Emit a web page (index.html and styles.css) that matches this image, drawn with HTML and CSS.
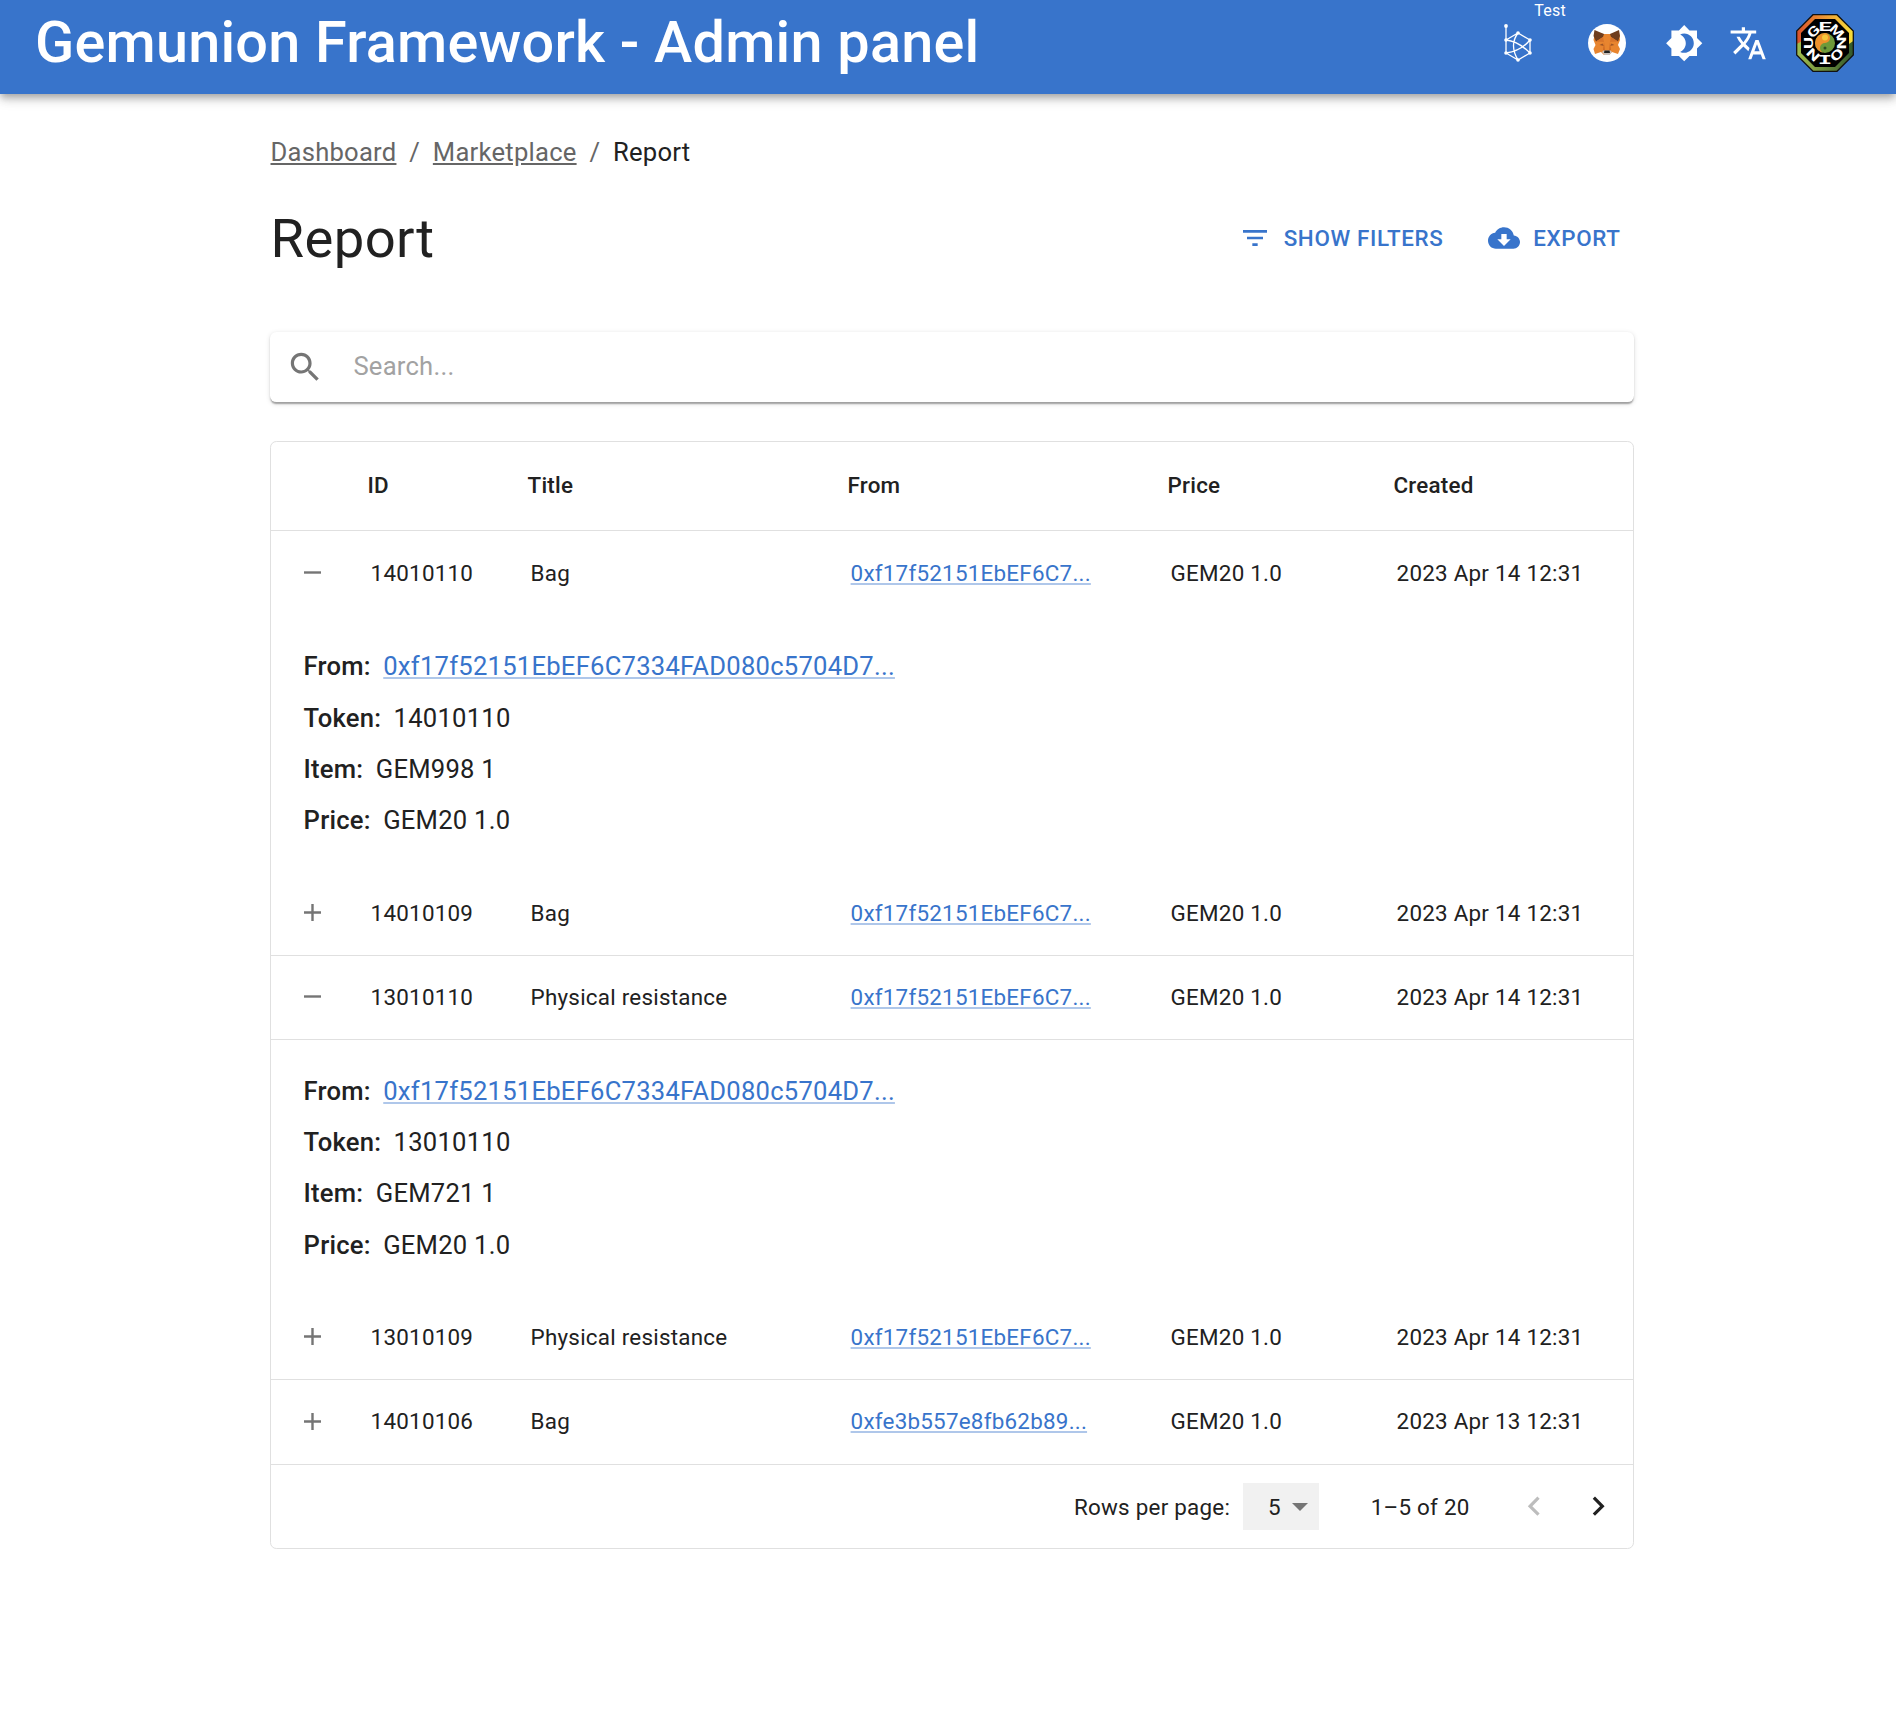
FILE: index.html
```
<!DOCTYPE html>
<html lang="en">
<head>
<meta charset="utf-8">
<title>Gemunion Framework - Admin panel</title>
<link rel="stylesheet" href="styles.css">
</head>
<body>
<header class="appbar">
  <h1 class="brand">Gemunion Framework - Admin panel</h1>
  <nav class="tools">
    <span class="tool network">
      <svg viewBox="0 0 30 40" width="30" height="40" fill="none" stroke="#fff" stroke-width="1.3">
        <path d="M3 3V30L15 37L27 30V17L15 10L3 17M15 10L27 17M3 17Q15 18 27 30M27 17Q18 28 3 30M15 10Q6 22 15 37"/>
        <g fill="#fff" stroke="none"><circle cx="3" cy="3" r="1.9"/><circle cx="3" cy="17" r="1.8"/><circle cx="15" cy="10" r="1.8"/><circle cx="27" cy="17" r="1.8"/><circle cx="27" cy="30" r="1.8"/><circle cx="3" cy="30" r="1.8"/><circle cx="15" cy="37" r="1.8"/></g>
      </svg>
      <span class="badge">Test</span>
    </span>
    <span class="tool wallet">
      <svg viewBox="0 0 38 38" width="38" height="38">
        <circle cx="19" cy="19" r="19" fill="#fff"/>
        <path d="M7 9L16 10H22L31 9L32 16L30 21L32 25L30 30L24 28L21 31H16L13 28L7 30L5.5 25L7.5 21L5.5 16Z" fill="#e8852f"/>
        <path d="M6.5 6L16 10L15 13L8 17.5L5.5 12ZM31 6L22 10L23 13L30 17.5L32 12Z" fill="#6f3d1d"/>
        <path d="M15 13L8 17.5L16 18ZM23 13L30 17.5L22 18Z" fill="#d8742a"/>
        <path d="M11.5 21L14.5 19.5L16 22ZM26.5 21L23.5 19.5L22 22Z" fill="#9b5426"/>
        <path d="M16 18L15 26L17 27ZM22 18L23 26L21 27Z" fill="#cf6b24"/>
        <path d="M14 28L15.5 26.5H22.5L24 28L21.5 31H16.5Z" fill="#c9c0ba"/>
        <path d="M16.5 26.5H21.5L22 29H16Z" fill="#222"/>
      </svg>
    </span>
    <span class="tool theme">
      <svg viewBox="0 0 24 24" width="38.4" height="38.4" fill="#fff"><path d="M20 8.69V4h-4.69L12 .69 8.69 4H4v4.69L.69 12 4 15.31V20h4.69L12 23.31 15.31 20H20v-4.69L23.31 12 20 8.69zM12 18c-.89 0-1.74-.2-2.5-.55C11.56 16.5 13 14.42 13 12s-1.44-4.5-3.5-5.45C10.26 6.2 11.11 6 12 6c3.31 0 6 2.69 6 6s-2.69 6-6 6z"/></svg>
    </span>
    <span class="tool lang">
      <svg viewBox="0 0 24 24" width="38.4" height="38.4" fill="#fff"><path d="M12.87 15.07l-2.54-2.51.03-.03c1.74-1.94 2.98-4.17 3.71-6.53H17V4h-7V2H8v2H1v1.99h11.17C11.5 7.92 10.44 9.75 9 11.35 8.07 10.32 7.3 9.19 6.69 8h-2c.73 1.63 1.73 3.17 2.98 4.56l-5.09 5.02L4 19l5-5 3.11 3.11.76-2.04zM18.5 10h-2L12 22h2l1.12-3h4.75L21 22h2l-4.5-12zm-2.62 7l1.62-4.33L19.12 17h-3.24z"/></svg>
    </span>
    <span class="tool avatar">
      <svg viewBox="0 0 58 58" width="58" height="58">
        <defs>
          <linearGradient id="warm"><stop offset="0" stop-color="#d9502a"/><stop offset=".5" stop-color="#ee9a35"/><stop offset="1" stop-color="#f7e03a"/></linearGradient>
          <linearGradient id="leaf"><stop offset="0" stop-color="#a3bf4e"/><stop offset="1" stop-color="#33592b"/></linearGradient>
        </defs>
        <path d="M17 .7H41L57.3 17V41L41 57.3H17L.7 41V17Z" fill="url(#leaf)"/>
        <path d="M.7 30V17L17 .7H41L57.3 17V27L50 32L29 26L8 26Z" fill="url(#warm)"/>
        <path d="M17 .7H41L57.3 17V41L41 57.3H17L.7 41V17Z" fill="none" stroke="#111" stroke-width="1.3"/>
        <path d="M19 5H39L53 19V39L39 53H19L5 39V19Z" fill="#000"/>
        <g class="ring">
          <text transform="rotate(-45 29 29) translate(29 17) scale(1.4 1)">G</text>
          <text transform="translate(29 17) scale(1.8 1)">E</text>
          <text transform="rotate(45 29 29) translate(29 17) scale(1.25 1)">M</text>
          <text transform="rotate(90 29 29) translate(29 17) scale(1.4 1)">N</text>
          <text transform="rotate(135 29 29) translate(29 17) scale(1.5 1)">O</text>
          <g class="serif"><text transform="rotate(180 29 29) translate(29 17) scale(1.8 1)">I</text></g>
          <text transform="rotate(225 29 29) translate(29 17) scale(1.4 1)">N</text>
          <text transform="rotate(270 29 29) translate(29 17) scale(1.4 1)">U</text>
        </g>
        <circle cx="29" cy="29" r="10" fill="#6e9a3a"/>
        <path d="M29 19A10 10 0 0 0 29 39A5 5 0 0 1 29 29A5 5 0 0 0 29 19Z" fill="#ee922c"/>
        <circle cx="29" cy="23.5" r="3" fill="#f5c83a"/>
        <circle cx="29" cy="34" r="1.5" fill="#2f4f22"/>
      </svg>
    </span>
  </nav>
</header>

<main class="container">
  <nav class="crumbs">
    <a>Dashboard</a><span class="sep">/</span><a>Marketplace</a><span class="sep">/</span><span class="current">Report</span>
  </nav>
  <div class="heading">
    <h2 class="title">Report</h2>
    <div class="actions">
      <button class="action"><svg viewBox="0 0 24 24" width="32" height="32" fill="currentColor"><path d="M10 18h4v-2h-4v2zM3 6v2h18V6H3zm3 7h12v-2H6v2z"/></svg>Show filters</button>
      <button class="action"><svg viewBox="0 0 24 24" width="32" height="32" fill="currentColor"><path d="M19.35 10.04C18.67 6.59 15.64 4 12 4 9.11 4 6.6 5.64 5.35 8.04 2.34 8.36 0 10.91 0 14c0 3.31 2.69 6 6 6h13c2.76 0 5-2.24 5-5 0-2.64-2.05-4.78-4.65-4.96zM17 13l-5 5-5-5h3V9h4v4h3z"/></svg>Export</button>
    </div>
  </div>
  <div class="search">
    <svg viewBox="0 0 24 24" width="38.4" height="38.4" fill="#757575"><path d="M15.5 14h-.79l-.28-.27C15.41 12.59 16 11.11 16 9.5 16 5.91 13.09 3 9.5 3S3 5.91 3 9.5 5.91 16 9.5 16c1.61 0 3.09-.59 4.23-1.57l.27.28v.79l5 4.99L20.49 19l-4.99-5zm-6 0C7.01 14 5 11.99 5 9.5S7.01 5 9.5 5 14 7.01 14 9.5 11.99 14 9.5 14z"/></svg>
    <span class="placeholder">Search...</span>
  </div>

  <section class="grid">
    <div class="row head"><span></span><span>ID</span><span>Title</span><span>From</span><span>Price</span><span>Created</span></div>
    <div class="row open"><svg class="toggle" viewBox="0 0 17 17"><path d="M0 8.5H17"/></svg><span>14010110</span><span>Bag</span><span><a class="link">0xf17f52151EbEF6C7...</a></span><span>GEM20 1.0</span><span>2023 Apr 14 12:31</span></div>
    <div class="detail first">
      <p><b>From:</b><a class="link">0xf17f52151EbEF6C7334FAD080c5704D7...</a></p>
      <p><b>Token:</b>14010110</p>
      <p><b>Item:</b>GEM998 1</p>
      <p><b>Price:</b>GEM20 1.0</p>
    </div>
    <div class="row"><svg class="toggle" viewBox="0 0 17 17"><path d="M0 8.5H17M8.5 0V17"/></svg><span>14010109</span><span>Bag</span><span><a class="link">0xf17f52151EbEF6C7...</a></span><span>GEM20 1.0</span><span>2023 Apr 14 12:31</span></div>
    <div class="row"><svg class="toggle" viewBox="0 0 17 17"><path d="M0 8.5H17"/></svg><span>13010110</span><span>Physical resistance</span><span><a class="link">0xf17f52151EbEF6C7...</a></span><span>GEM20 1.0</span><span>2023 Apr 14 12:31</span></div>
    <div class="detail">
      <p><b>From:</b><a class="link">0xf17f52151EbEF6C7334FAD080c5704D7...</a></p>
      <p><b>Token:</b>13010110</p>
      <p><b>Item:</b>GEM721 1</p>
      <p><b>Price:</b>GEM20 1.0</p>
    </div>
    <div class="row"><svg class="toggle" viewBox="0 0 17 17"><path d="M0 8.5H17M8.5 0V17"/></svg><span>13010109</span><span>Physical resistance</span><span><a class="link">0xf17f52151EbEF6C7...</a></span><span>GEM20 1.0</span><span>2023 Apr 14 12:31</span></div>
    <div class="row last"><svg class="toggle" viewBox="0 0 17 17"><path d="M0 8.5H17M8.5 0V17"/></svg><span>14010106</span><span>Bag</span><span><a class="link">0xfe3b557e8fb62b89...</a></span><span>GEM20 1.0</span><span>2023 Apr 13 12:31</span></div>
    <footer class="pager">
      <span>Rows per page:</span>
      <span class="select">5<svg viewBox="0 0 16 8" width="16" height="8" fill="#757575"><path d="M0 0H16L8 8Z"/></svg></span>
      <span class="range">1–5 of 20</span>
      <svg class="prev" viewBox="0 0 24 24" width="38.4" height="38.4" fill="#bdbdbd"><path d="M15.41 7.41 14 6l-6 6 6 6 1.41-1.41L10.83 12z"/></svg>
      <svg class="next" viewBox="0 0 24 24" width="38.4" height="38.4" fill="#212121"><path d="M10 6 8.59 7.41 13.17 12l-4.58 4.59L10 18l6-6z"/></svg>
    </footer>
  </section>
</main>
</body>
</html>
```
FILE: styles.css
```
* { box-sizing: border-box; }
body {
  margin: 0;
  min-height: 1720px;
  background: #fff;
  color: #212121;
  font: 400 25.6px/38px Roboto, sans-serif;
  letter-spacing: 0.24px;
}
h1, h2, p { margin: 0; font-weight: 400; }
svg { display: block; flex: none; }

.appbar {
  display: flex;
  justify-content: space-between;
  height: 94px;
  padding: 0 42px 0 35px;
  background: #3874cb;
  color: #fff;
  box-shadow: 0 3.2px 6.4px -1.6px rgba(0,0,0,.2), 0 6.4px 8px rgba(0,0,0,.14), 0 1.6px 16px rgba(0,0,0,.12);
}
.brand { font-size: 57.6px; font-weight: 500; line-height: 86px; letter-spacing: 0.22px; white-space: nowrap; }
.tools { display: flex; align-items: center; height: 86px; }
.network { position: relative; margin-right: 55px; }
.badge { position: absolute; left: 31px; top: -22px; font-size: 16px; line-height: 20px; }
.wallet { margin-right: 39px; }
.theme { margin-right: 25px; }
.lang { margin-right: 29px; }
.ring { fill: #fff; font: 700 13px Roboto, sans-serif; letter-spacing: 0; text-anchor: middle; }
.serif { font-family: "Liberation Mono", monospace; }

.container { display: flex; flex-direction: column; width: 1364px; margin: 0 0 0 270px; }
.crumbs { display: flex; margin-top: 39px; padding-left: 0.5px; color: #666; }
.crumbs a { text-decoration: underline; }
.crumbs .sep { margin: 0 12.8px; }
.current { color: #212121; }

.heading { display: flex; justify-content: space-between; align-items: center; margin-top: 32px; height: 70px; }
.title { padding-left: 0.6px; font-size: 54.4px; line-height: 67px; letter-spacing: 0.4px; }
.actions { display: flex; gap: 45px; padding-right: 13.4px; }
.action {
  display: flex;
  align-items: center;
  gap: 12.8px;
  padding: 0;
  border: 0;
  background: none;
  color: #3874cb;
  font: 500 22.4px/39px Roboto, sans-serif;
  letter-spacing: 0.64px;
  text-transform: uppercase;
}

.search {
  display: flex;
  align-items: center;
  height: 70px;
  margin-top: 59px;
  padding-left: 16px;
  border-radius: 6.4px;
  box-shadow: 0 3.2px 1.6px -1.6px rgba(0,0,0,.2), 0 1.6px 1.6px rgba(0,0,0,.14), 0 1.6px 4.8px rgba(0,0,0,.12);
}
.placeholder { margin-left: 29px; padding-bottom: 2px; color: #a2a2a2; }

.grid { margin-top: 39px; border: 1px solid #e0e0e0; border-radius: 6.4px; }
.row {
  display: grid;
  grid-template-columns: 99.6px 160px 320px 320px 226px 1fr;
  align-items: center;
  height: 84px;
  padding-bottom: 2px;
  border-bottom: 1px solid #e0e0e0;
  font-size: 22.4px;
}
.row.open { padding-bottom: 0; border-bottom-color: transparent; }
.row.last { height: 85px; }
.row.head { grid-template-columns: 96.5px 160px 320px 320px 226px 1fr; height: 89px; padding-bottom: 3px; font-weight: 500; }
.toggle {
  width: 17px;
  height: 17px;
  margin-left: 33px;
  fill: none;
  stroke: #757575;
  stroke-width: 2.4;
}
.link { color: #3874cb; text-decoration: underline; text-decoration-color: #afc7ea; }
.detail { height: 256px; padding: 26px 32.6px; line-height: 51.2px; }
.detail.first { height: 257px; padding-top: 26.4px; }
.detail b { margin-right: 12.4px; font-weight: 500; }

.pager { display: flex; align-items: center; height: 83px; font-size: 22.4px; padding-left: 803px; }
.select { display: flex; align-items: center; gap: 11px; width: 76px; height: 47px; margin-left: 13px; padding-left: 25px; background: #f1f1f1; }
.range { margin-left: 51.6px; }
.prev { margin: 0 0 1px 45px; }
.next { margin: 0 0 1px 26px; }
```
